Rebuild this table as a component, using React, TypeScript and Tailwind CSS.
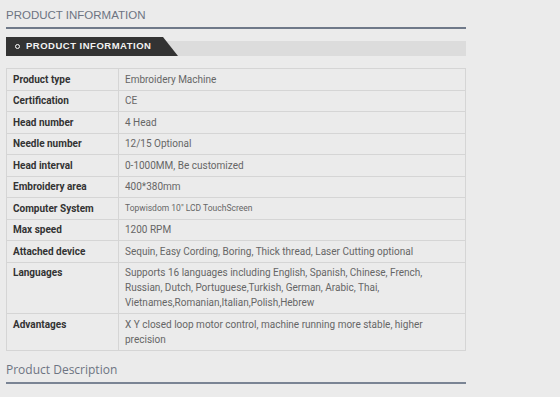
const rows: [string, string, boolean?][] = [
  ["Product type", "Embroidery Machine"],
  ["Certification", "CE"],
  ["Head number", "4 Head"],
  ["Needle number", "12/15 Optional"],
  ["Head interval", "0-1000MM, Be customized"],
  ["Embroidery area", "400*380mm"],
  ["Computer System", "Topwisdom 10\" LCD TouchScreen", true],
  ["Max speed", "1200 RPM"],
  ["Attached device", "Sequin, Easy Cording, Boring, Thick thread, Laser Cutting optional"],
  ["Languages", "Supports 16 languages including English, Spanish, Chinese, French, Russian, Dutch, Portuguese,Turkish, German, Arabic, Thai, Vietnames,Romanian,Italian,Polish,Hebrew"],
  ["Advantages", "X Y closed loop motor control, machine running more stable, higher precision"],
];

export default function App() {
  return (
    <div className="w-[560px] h-[397px] overflow-hidden bg-[#ebebeb] pl-[6px] pt-[7px] font-['Roboto',sans-serif]">
      <div className="w-[460px]">
        <h2 className="text-[11.5px] leading-[16px] text-[#6d7482] font-['Liberation_Sans',sans-serif] border-b-2 border-[#6f7989] pb-[4px]">
          PRODUCT INFORMATION
        </h2>
        <div className="mt-[8px] relative h-[19px]">
          <div className="absolute left-0 right-0 bottom-0 h-[15px] bg-[#dcdcdc]" />
          <div
            className="absolute left-0 top-0 h-[19px] w-[172px] bg-[#333333] flex items-center pl-[9px] gap-[6px]"
            style={{ clipPath: "polygon(0 0, 157px 0, 172px 100%, 0 100%)" }}
          >
            <span className="w-[5px] h-[5px] rounded-full border border-white" />
            <span className="text-[#f2f2f2] text-[9.5px] font-bold tracking-[0.5px] font-['Liberation_Sans',sans-serif]">
              PRODUCT INFORMATION
            </span>
          </div>
        </div>
        <table className="mt-[12px] w-full border-collapse text-[10px]">
          <tbody>
            {rows.map(([k, v, small]) => (
              <tr key={k}>
                <td className="w-[112px] border border-[#d5d5d5] px-[6px] py-[2.75px] align-top leading-[15px] font-bold text-[#333]">{k}</td>
                <td className={`border border-[#d5d5d5] px-[6px] py-[2.75px] align-top leading-[15px] text-[#666] ${small ? "text-[8.5px]" : ""}`}>{v}</td>
              </tr>
            ))}
          </tbody>
        </table>
        <h3 className="mt-[11px] text-[12px] leading-[16px] text-[#6d7482] font-['Open_Sans',sans-serif] border-b-2 border-[#7a8494] pb-[4px]">
          Product Description
        </h3>
      </div>
    </div>
  );
}
